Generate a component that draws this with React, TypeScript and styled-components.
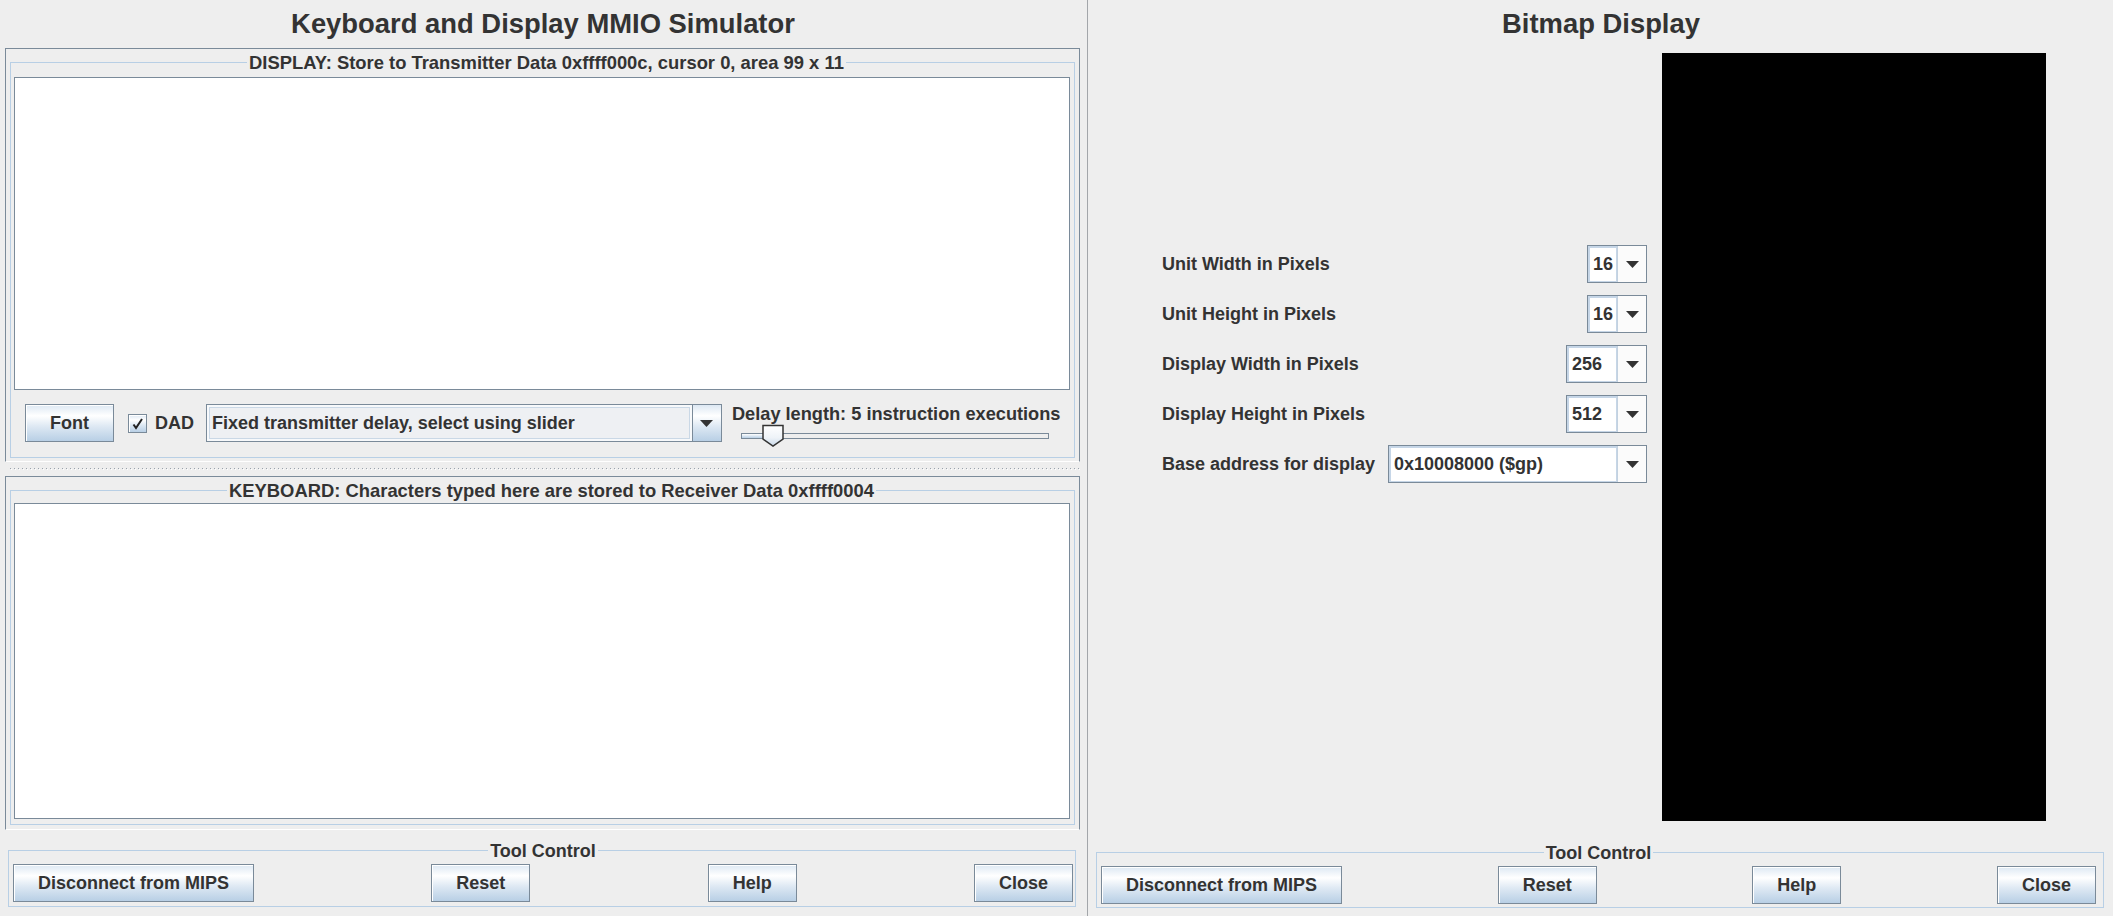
import React from "react";
import styled, { createGlobalStyle } from "styled-components";

const GlobalStyle = createGlobalStyle`
  html, body { margin: 0; padding: 0; background: #eeeeee; }
  body {
    width: 2113px; height: 916px; overflow: hidden;
    font-family: "Liberation Sans", Arial, sans-serif; color: #333333;
  }
  * { box-sizing: border-box; }
`;

const FONT = `"Liberation Sans", Arial, sans-serif`;
const GRADIENT = `linear-gradient(to bottom, #dde8f3 0%, #ffffff 30%, #dde8f3 60%, #b8cfe5 100%)`;

const Screen = styled.div`
  display: flex;
  width: 2113px;
  height: 916px;
  background: #eeeeee;
`;

const Window = styled.section<{ $width?: number }>`
  display: flex;
  flex-direction: column;
  ${(p) => (p.$width ? `width: ${p.$width}px; flex: none;` : `flex: 1; min-width: 0;`)}
`;

const WindowTitle = styled.h1`
  margin: 0;
  height: 48px;
  text-align: center;
  font: bold 27.4px/48px ${FONT};
  color: #333333;
`;

const WindowSeparator = styled.div`
  width: 3px;
  flex: none;
  display: flex;
  justify-content: center;
  &::before {
    content: "";
    width: 1px;
    background: #a3a6aa;
  }
`;

const SplitSection = styled.div<{ $pad: string }>`
  margin: 0 6px 0 5px;
  border: 1px solid #7a8a99;
  border-bottom-color: #ffffff;
  padding: ${(p) => p.$pad};
`;

const SplitDivider = styled.div`
  height: 14px;
  padding-top: 6px;
`;

const Bumps = styled.div`
  height: 2px;
  margin: 0 6px 0 10px;
  background-image: linear-gradient(90deg, #9aa3ad 1px, transparent 1px),
    linear-gradient(90deg, #ffffff 1px, transparent 1px);
  background-size: 4px 1px, 4px 1px;
  background-position: 0 0, 1px 1px;
  background-repeat: repeat-x;
`;

const Group = styled.fieldset<{ $pad: string; $margin?: string }>`
  margin: ${(p) => p.$margin || "0"};
  min-width: 0;
  border: 1px solid #b8cfe5;
  padding: ${(p) => p.$pad};
`;

const GroupTitle = styled.legend<{ $start?: number; $size?: number }>`
  margin: ${(p) => (p.$start !== undefined ? `0 auto 0 ${p.$start}px` : "0 auto")};
  padding: 2px 2px 0;
  font: bold ${(p) => p.$size || 18}px/20px ${FONT};
  color: #333333;
  white-space: nowrap;
`;

const TextPane = styled.textarea<{ $h: number }>`
  display: block;
  width: 100%;
  height: ${(p) => p.$h}px;
  margin: 0;
  padding: 0;
  resize: none;
  outline: none;
  border: 1px solid #7a8a99;
  background: #ffffff;
  font: 16px "Liberation Mono", monospace;
`;

const ControlRow = styled.div`
  display: flex;
  align-items: flex-start;
  height: 42px;
  margin-top: 14px;
  padding-left: 11px;
`;

const Button = styled.button`
  flex: none;
  height: 38px;
  margin: 0;
  padding: 0 24px;
  border: 1px solid #7a8a99;
  border-radius: 0;
  background: ${GRADIENT};
  box-shadow: inset 1px 1px 0 #ffffff;
  font: bold 18px/20px ${FONT};
  color: #333333;
  white-space: nowrap;
`;

const CheckWrap = styled.label`
  display: flex;
  align-items: center;
  height: 38px;
  margin-left: 14px;
  gap: 8px;
  font: bold 18px/20px ${FONT};
  color: #333333;
`;

const CheckBox = styled.span`
  display: flex;
  align-items: center;
  justify-content: center;
  width: 19px;
  height: 19px;
  border: 1px solid #7a8a99;
  background: ${GRADIENT};
  box-shadow: inset 1px 1px 0 #ffffff;
`;

const DelayCombo = styled.div`
  display: flex;
  width: 516px;
  height: 38px;
  margin-left: 12px;
  border: 1px solid #7a8a99;
  background: #eef0f3;
`;

const DelayComboText = styled.div`
  flex: 1;
  display: flex;
  align-items: center;
  padding-left: 5px;
  box-shadow: inset 0 0 0 2px #f7f9fb, inset 0 0 0 3px #cad8e6;
  font: bold 18px/20px ${FONT};
  color: #333333;
  white-space: nowrap;
`;

const ArrowButton = styled.div<{ $plain?: boolean }>`
  flex: none;
  width: 29px;
  display: flex;
  align-items: center;
  justify-content: center;
  border-left: 1px solid ${(p) => (p.$plain ? "#c3d1df" : "#7a8a99")};
  background: ${(p) => (p.$plain ? "#fbfbfb" : GRADIENT)};
`;

const DelayBlock = styled.div`
  display: flex;
  flex-direction: column;
  margin-left: 10px;
`;

const DelayLabel = styled.div`
  font: bold 18.2px/20px ${FONT};
  color: #333333;
  white-space: nowrap;
`;

const SliderBox = styled.div`
  position: relative;
  width: 308px;
  height: 23px;
  margin-left: 9px;
`;

const SliderTrack = styled.div`
  margin-top: 9px;
  height: 6px;
  border: 1px solid #7a8a99;
  background: linear-gradient(to bottom, #ffffff, #b8cfe5) 0 0 / 24px 100% no-repeat, #eeeeee;
`;

const SliderThumb = styled.svg`
  position: absolute;
  left: 21px;
  top: 0;
`;

const ToolButtons = styled.div`
  display: flex;
  justify-content: space-between;
  align-items: center;
`;

const BitmapBody = styled.div`
  display: flex;
  align-items: flex-start;
  gap: 15px;
  height: 793px;
  padding: 5px 0 0 73px;
`;

const SettingsForm = styled.div`
  width: 485px;
  margin-top: 192px;
  display: flex;
  flex-direction: column;
  gap: 12px;
`;

const SettingRow = styled.div`
  display: flex;
  align-items: center;
  justify-content: space-between;
  height: 38px;
`;

const SettingLabel = styled.span`
  font: bold 18px/20px ${FONT};
  color: #333333;
  white-space: nowrap;
`;

const Combo = styled.div<{ $w: number }>`
  display: flex;
  width: ${(p) => p.$w}px;
  height: 38px;
  border: 1px solid #7a8a99;
  background: #ffffff;
`;

const ComboField = styled.div`
  flex: 1;
  display: flex;
  align-items: center;
  padding-left: 5px;
  box-shadow: inset 2px 2px 0 #c6d6e7, inset -1px -1px 0 #c6d6e7;
  font: bold 18px/20px ${FONT};
  color: #333333;
  white-space: nowrap;
`;

const BitmapCanvas = styled.div`
  flex: none;
  width: 384px;
  height: 768px;
  background: #000000;
`;

const Arrow = () => (
  <svg width="13" height="7" viewBox="0 0 13 7">
    <polygon points="0,0 13,0 6.5,7" fill="#333333" />
  </svg>
);

type ToolControlProps = { margin: string; pad: string };
const ToolControl = ({ margin, pad }: ToolControlProps) => (
  <Group $margin={margin} $pad={pad}>
    <GroupTitle>Tool Control</GroupTitle>
    <ToolButtons>
      <Button>Disconnect from MIPS</Button>
      <Button>Reset</Button>
      <Button>Help</Button>
      <Button>Close</Button>
    </ToolButtons>
  </Group>
);

const settings = [
  { label: "Unit Width in Pixels", value: "16", w: 60 },
  { label: "Unit Height in Pixels", value: "16", w: 60 },
  { label: "Display Width in Pixels", value: "256", w: 81 },
  { label: "Display Height in Pixels", value: "512", w: 81 },
  { label: "Base address for display", value: "0x10008000 ($gp)", w: 259 },
];

export default function App() {
  return (
    <>
      <GlobalStyle />
      <Screen>
        <Window $width={1086}>
          <WindowTitle>Keyboard and Display MMIO Simulator</WindowTitle>
          <SplitSection $pad="2px 4px 3px 4px">
            <Group $pad="4px 4px 11px 3px">
              <GroupTitle $start={233} $size={18.4}>
                DISPLAY: Store to Transmitter Data 0xffff000c, cursor 0, area 99 x 11
              </GroupTitle>
              <TextPane $h={313} readOnly value="" />
              <ControlRow>
                <Button>Font</Button>
                <CheckWrap>
                  <CheckBox>
                    <svg width="13" height="13" viewBox="0 0 13 13">
                      <path d="M2.5 7.5 L5 11 L11 2" fill="none" stroke="#222222" strokeWidth="2" />
                    </svg>
                  </CheckBox>
                  DAD
                </CheckWrap>
                <DelayCombo>
                  <DelayComboText>Fixed transmitter delay, select using slider</DelayComboText>
                  <ArrowButton>
                    <Arrow />
                  </ArrowButton>
                </DelayCombo>
                <DelayBlock>
                  <DelayLabel>Delay length: 5 instruction executions</DelayLabel>
                  <SliderBox>
                    <SliderTrack />
                    <SliderThumb width="22" height="23" viewBox="0 0 22 23">
                      <defs>
                        <linearGradient id="thumbFill" x1="0" y1="0" x2="0" y2="1">
                          <stop offset="0" stopColor="#ffffff" />
                          <stop offset="0.6" stopColor="#eef3f8" />
                          <stop offset="1" stopColor="#c9d9ea" />
                        </linearGradient>
                      </defs>
                      <path d="M1 1.5 H21 V15 L11 22 L1 15 Z" fill="url(#thumbFill)" stroke="#333333" strokeWidth="1.5" />
                    </SliderThumb>
                  </SliderBox>
                </DelayBlock>
              </ControlRow>
            </Group>
          </SplitSection>
          <SplitDivider>
            <Bumps />
          </SplitDivider>
          <SplitSection $pad="2px 4px 4px 4px">
            <Group $pad="2px 4px 5px 3px">
              <GroupTitle $start={213} $size={18.4}>
                KEYBOARD: Characters typed here are stored to Receiver Data 0xffff0004
              </GroupTitle>
              <TextPane $h={316} />
            </Group>
          </SplitSection>
          <ToolControl margin="9px 10px 0 8px" pad="3px 2px 4px 4px" />
        </Window>
        <WindowSeparator />
        <Window>
          <WindowTitle>Bitmap Display</WindowTitle>
          <BitmapBody>
            <SettingsForm>
              {settings.map((s) => (
                <SettingRow key={s.label}>
                  <SettingLabel>{s.label}</SettingLabel>
                  <Combo $w={s.w}>
                    <ComboField>{s.value}</ComboField>
                    <ArrowButton $plain>
                      <Arrow />
                    </ArrowButton>
                  </Combo>
                </SettingRow>
              ))}
            </SettingsForm>
            <BitmapCanvas />
          </BitmapBody>
          <ToolControl margin="0 9px 0 7px" pad="3px 7px 3px 4px" />
        </Window>
      </Screen>
    </>
  );
}
